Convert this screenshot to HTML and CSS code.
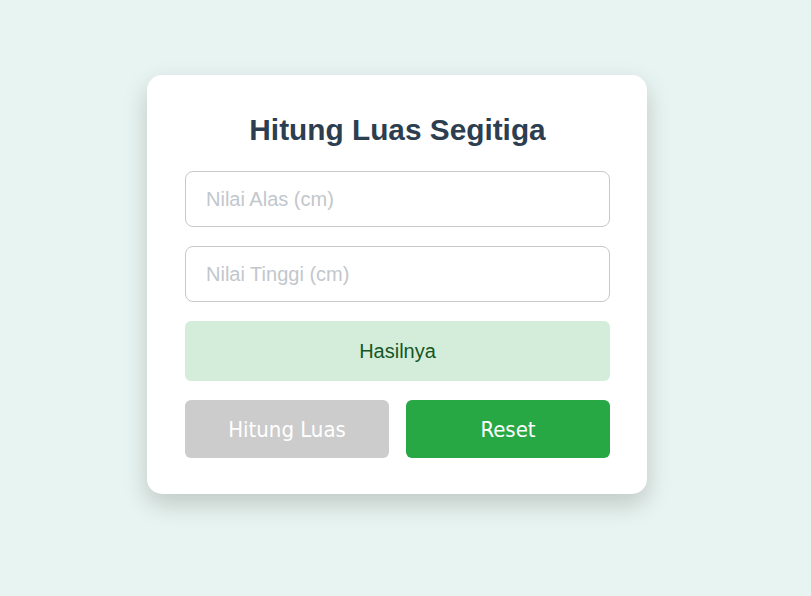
FILE: index.html
```html
<!DOCTYPE html>
<html lang="id">
<head>
<meta charset="utf-8">
<title>Hitung Luas Segitiga</title>
<link rel="stylesheet" href="styles.css">
</head>
<body>
<main class="page">
  <section class="card">
    <h2 class="title">Hitung Luas Segitiga</h2>
    <input class="field" type="number" placeholder="Nilai Alas (cm)">
    <input class="field" type="number" placeholder="Nilai Tinggi (cm)">
    <div class="result">Hasilnya</div>
    <div class="actions">
      <button class="btn btn-calc" disabled>Hitung Luas</button>
      <button class="btn btn-reset">Reset</button>
    </div>
  </section>
</main>
</body>
</html>
```
FILE: styles.css
```css
html, body {
  margin: 0;
  padding: 0;
  background: #e8f4f1;
  font-family: "Liberation Sans", Arial, sans-serif;
}

.page {
  width: 794px;
  min-height: 596px;
  box-sizing: border-box;
  padding-top: 75px;
  padding-bottom: 60px;
  display: flex;
  justify-content: center;
  align-items: flex-start;
}

.card {
  width: 500px;
  box-sizing: border-box;
  padding: 38px 37px 36px 38px;
  background: #ffffff;
  border-radius: 15px;
  box-shadow: 0 10px 24px rgba(0, 0, 0, 0.18);
  display: flex;
  flex-direction: column;
  gap: 19px;
}

.title {
  margin: 0 0 5px 0;
  font-size: 29.8px;
  line-height: 34px;
  font-weight: bold;
  text-align: center;
  color: #2c3e50;
}

.field {
  display: block;
  width: 100%;
  height: 56px;
  box-sizing: border-box;
  padding: 0 20px;
  border: 1px solid #c8c8c8;
  border-radius: 8px;
  font-family: "Liberation Sans", Arial, sans-serif;
  font-size: 20px;
  color: #333;
  outline: none;
  -moz-appearance: textfield;
}

.field::-webkit-outer-spin-button,
.field::-webkit-inner-spin-button {
  -webkit-appearance: none;
  margin: 0;
}

.field::placeholder {
  color: #c2c7cc;
}

.result {
  height: 60px;
  display: flex;
  align-items: center;
  justify-content: center;
  background: #d4edda;
  color: #155724;
  border-radius: 6px;
  font-size: 20px;
}

.actions {
  display: flex;
  gap: 17px;
}

.btn {
  flex: 1;
  height: 58px;
  border: none;
  border-radius: 6px;
  color: #ffffff;
  font-family: "DejaVu Sans Condensed", "DejaVu Sans", sans-serif;
  font-size: 22px;
  cursor: pointer;
}

.btn-calc {
  background: #cccccc;
}

.btn-reset {
  background: #28a745;
}
```
